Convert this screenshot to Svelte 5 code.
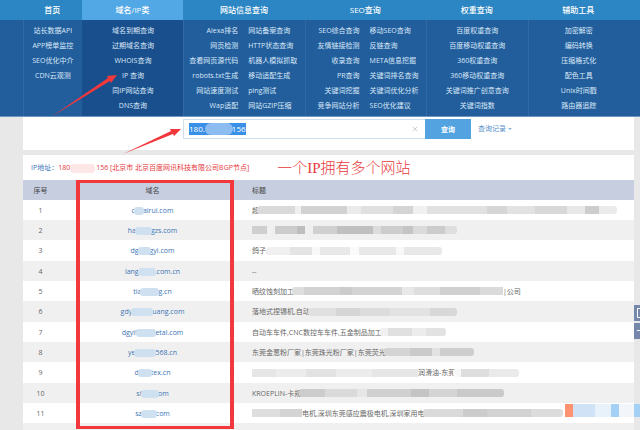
<script lang="ts">
	import { onMount } from 'svelte';

	// a number pair is a pixelated block: [width, grey level]
	type Part = string | [number, number];

	const menus = [
		{ title: '首页', kind: 'home', cols: [['站长数据API', 'APP榜单监控', 'SEO优化中介', 'CDN云观测']] },
		{
			title: '域名/IP类',
			kind: 'domain',
			cols: [['域名到期查询', '过期域名查询', 'WHOIS查询', 'IP 查询', '同IP网站查询', 'DNS查询']]
		},
		{
			title: '网站信息查询',
			kind: 'wide',
			cols: [
				['Alexa排名', '网页检测', '查看网页源代码', 'robots.txt生成', '网站速度测试', 'Wap适配'],
				['网站备案查询', 'HTTP状态查询', '机器人模拟抓取', '移动适配生成', 'ping测试', '网站GZIP压缩']
			]
		},
		{
			title: 'SEO查询',
			kind: 'wide',
			cols: [
				['SEO综合查询', '友情链接检测', '收录查询', 'PR查询', '关键词挖掘', '竞争网站分析'],
				['移动SEO查询', '反链查询', 'META信息挖掘', '关键词排名查询', '关键词优化分析', 'SEO优化建议']
			]
		},
		{
			title: '权重查询',
			kind: 'weight',
			cols: [
				['百度权重查询', '百度移动权重查询', '360权重查询', '360移动权重查询', '关键词推广创意查询', '关键词指数']
			]
		},
		{
			title: '辅助工具',
			kind: 'tools',
			cols: [['加密解密', '编码转换', '压缩格式化', '配色工具', 'Unix时间戳', '路由器追踪']]
		}
	];

	const rows: { head: string; mask: number; tail: string; title: Part[] }[] = [
		{ head: 'c', mask: 10, tail: 'airui.com', title: ['超', [38, 218], [6, 240], [46, 210], [14, 235], [32, 224], [20, 212], [14, 240], [60, 225], [20, 214], [28, 226], [32, 216], [18, 232], [14, 205], [18, 235]] },
		{ head: 'ha', mask: 17, tail: 'gzs.com', title: [[15, 207], [8, 240], [22, 204], [8, 190], [8, 240], [24, 208], [36, 192], [8, 220], [22, 205], [10, 196], [14, 218], [18, 204], [12, 222]] },
		{ head: 'dg', mask: 13, tail: 'gyi.com', title: ['鸽子,', [24, 240], [22, 228], [8, 248], [30, 232], [9, 250], [37, 232], [8, 248], [38, 232]] },
		{ head: 'lang', mask: 18, tail: '.com.cn', title: ['--'] },
		{ head: 'tia', mask: 19, tail: 'g.cn', title: ['晒纹蚀刻加工', [12, 222], [36, 210], [12, 204], [50, 212], [12, 232], [26, 222], [40, 208], [23, 218], '|公司'] },
		{ head: 'gdy', mask: 22, tail: 'uang.com', title: ['落地式捏锡机,自动', [28, 224], [24, 214], [30, 220], [40, 226], [27, 216]] },
		{ head: 'dgyif', mask: 20, tail: 'etal.com', title: ['自动车车件,CNC数控车车件,五金制品加工', [8, 240], [24, 224], [14, 236], [20, 226]] },
		{ head: 'ye', mask: 22, tail: '568.cn', title: ['东莞金葱粉厂家|东莞珠光粉厂家|东莞荧光', [26, 212], [22, 202], [8, 226], [34, 206]] },
		{ head: 'd', mask: 14, tail: 'tex.cn', title: [[24, 230], [30, 236], [30, 226], [36, 236], [46, 230], '润滑油-东莞', [8, 248], [28, 222], [30, 234]] },
		{ head: 'sf', mask: 18, tail: 'om', title: ['KROEPLIN-卡规', [26, 204], [32, 218], [10, 230], [44, 208], [18, 196], [28, 212], [47, 202]] },
		{ head: 'sz', mask: 16, tail: 'com', title: [[28, 222], [22, 212], '电机,深圳东莞感应震极电机,深圳家用电', [40, 218], [24, 204], [44, 210], [32, 220]] }
	];

	let ip = $state('180.\u00a0\u00a0\u00a0\u00a0\u00a0\u00a0\u00a0\u00a0\u00a0\u00a0\u00a0\u00a0\u00a0156');
	let box: HTMLInputElement;

	onMount(() => {
		box.focus();
		box.select();
	});
</script>

<div class="page">
	<nav>
		{#each menus as menu}
			<section class={menu.kind}>
				<a class="title" href="#top">{menu.title}</a>
				<div class="drop">
					{#each menu.cols as col}
						<ul>
							{#each col as item}
								<li><a href="#top">{item}</a></li>
							{/each}
						</ul>
					{/each}
				</div>
			</section>
		{/each}
	</nav>

	<main>
		<form class="search" onsubmit={(e) => e.preventDefault()}>
			<div class="field">
				<input aria-label="IP" bind:this={box} bind:value={ip} />
				<span class="smudge"></span>
				<button type="button" class="clear" aria-label="×" onclick={() => (ip = '')}>
					<svg viewBox="0 0 8 8"><path d="M1 1l6 6M7 1l-6 6" /></svg>
				</button>
			</div>
			<button class="go">查询</button>
			<a class="history" href="#top">
				查询记录
				<svg viewBox="0 0 4 3"><path d="M0 0h4l-2 2z" /></svg>
			</a>
		</form>

		<div class="result">
			<div class="summary">
				<p>
					<span class="key">IP地址：</span>180<i></i>156 [北京市 北京百度网讯科技有限公司BGP节点]
				</p>
				<strong>一个IP拥有多个网站</strong>
			</div>
			<table>
				<thead>
					<tr><th class="no">序号</th><th class="domain">域名</th><th class="name">标题</th></tr>
				</thead>
				<tbody>
					{#each rows as row, i}
						<tr>
							<td>{i + 1}</td>
							<td>
								<a href="#top">{row.head}<i style:width="{row.mask}px"></i>{row.tail}</a>
							</td>
							<td class="name">
								<div class="parts">
									{#each row.title as part}
										{#if typeof part === 'string'}
											<span>{part}</span>
										{:else}
											<b style:width="{part[0]}px" style:background="rgb({part[1]}, {part[1]}, {part[1]})"></b>
										{/if}
									{/each}
								</div>
							</td>
						</tr>
					{/each}
					<tr><td></td><td></td><td></td></tr>
				</tbody>
			</table>
			<div class="frame"></div>
		</div>
	</main>

	<svg class="arrows" viewBox="0 0 640 430">
		<path d="M51 117L108 78L107 76L117 75L111 83L110 81Z" />
		<path d="M123 154L171 131L170 129L181 129L174 136L173 134Z" />
	</svg>

	<aside>
		<button aria-label="□"><svg viewBox="0 0 6 16"><path d="M6 3.5H3.5v9H6" /></svg></button>
		<button aria-label="•"><svg viewBox="0 0 6 16"><path d="M3 7.5h3" /></svg></button>
	</aside>

	<div class="mark"><i></i><i></i><i></i><i></i><i></i><i></i></div>
</div>

<style>
	:global(body) {
		background: #e8e8e8;
	}

	.page {
		position: relative;
		height: 100vh;
		overflow: hidden;
		font: 7px/15px 'Open Sans', 'Noto Sans CJK SC', sans-serif;
		color: #666;
	}

	a {
		color: inherit;
		text-decoration: none;
	}

	button {
		border: 0;
		padding: 0;
		font: inherit;
	}

	nav {
		display: flex;
		height: 117px;
		padding: 0 11px 0 23px;
		box-sizing: border-box;
		background: linear-gradient(#2c86c3 20px, #225d9c 20px);
		border-bottom: 1px solid #6f96c0;
		color: #d9e9f8;
	}

	section {
		flex: 102 1 0;
		display: flex;
		flex-direction: column;
		text-align: center;
	}

	.home {
		flex-grow: 59;
	}

	.wide {
		flex-grow: 122;
	}

	.title {
		height: 20px;
		font-size: 8px;
		line-height: 20px;
		font-weight: 500;
		color: #fff;
	}

	.drop {
		flex: 1;
		display: flex;
		gap: 10px;
		padding-top: 3px;
		border-left: 1px solid #2f6aa6;
	}

	section.domain .title {
		background: #52a7e5;
	}

	section.domain .drop {
		background: #194f8c;
		border-color: #194f8c;
	}

	ul {
		flex: 1;
		margin: 0;
		padding: 0;
		list-style: none;
		white-space: nowrap;
	}

	.wide ul:first-child {
		flex: 0 0 54px;
		text-align: right;
	}

	.wide ul:last-child {
		text-align: left;
	}

	main {
		padding: 0 6px 0 23px;
	}

	.search {
		display: flex;
		height: 33px;
		box-sizing: border-box;
		padding: 2px 0 11px 160px;
		background: #fff;
	}

	.field {
		position: relative;
		flex: 0 1 242px;
		display: flex;
		align-items: center;
		border: 1px solid #cfdfec;
		border-right: 0;
		box-sizing: border-box;
	}

	input {
		flex: 1;
		min-width: 0;
		border: 0;
		outline: 0;
		padding: 0 5px;
		background: none;
		font: 8px/12px 'Open Sans', sans-serif;
		color: #333;
	}

	input::selection {
		background: #3a8fe6;
		color: #fff;
	}

	.smudge {
		position: absolute;
		left: 21px;
		top: 3px;
		width: 28px;
		height: 12px;
		border-radius: 6px;
		background: #8dbcf0;
	}

	.clear {
		width: 20px;
		height: 18px;
		background: none;
	}

	.clear svg {
		width: 6px;
		height: 6px;
		fill: none;
		stroke: #b4bfc9;
	}

	.go {
		width: 46px;
		background: #52a3df;
		color: #fff;
		font-weight: 600;
	}

	.history {
		padding-left: 7px;
		line-height: 20px;
		color: #5590c8;
	}

	.history svg {
		width: 4px;
		height: 3px;
		fill: #8bb4da;
	}

	.result {
		position: relative;
		margin-top: 5px;
		background: #fff;
	}

	.summary {
		display: flex;
		align-items: center;
		gap: 28px;
		height: 25px;
		padding-left: 8px;
		color: #e8393c;
		white-space: nowrap;
	}

	.summary p {
		margin: 0;
	}

	.key {
		color: #3a76b5;
	}

	.summary i {
		display: inline-block;
		width: 25px;
		height: 9px;
		margin-right: 1px;
		border-radius: 4px;
		background: #fde6e6;
		vertical-align: middle;
	}

	strong {
		font: 15px/20px 'Liberation Serif', 'Noto Sans CJK SC', serif;
		font-weight: 300;
	}

	table {
		width: 100%;
		border-collapse: collapse;
		table-layout: fixed;
		text-align: center;
	}

	th,
	td {
		height: 20px;
		padding: 0;
		font-weight: 400;
	}

	th {
		background: #c7cee0;
		color: #444;
	}

	.no {
		width: 35px;
		padding-right: 18px;
	}

	th.domain {
		width: 153px;
	}

	td:first-child {
		padding-right: 18px;
	}

	.name {
		padding-left: 23px;
		text-align: left;
	}

	tbody tr:nth-child(even) {
		background: #f0f0f0;
	}

	tbody tr:nth-child(3n) td {
		height: 21px;
	}

	td a {
		color: #3a74b4;
	}

	/* blobs smear over the letters beside them */
	td i {
		position: relative;
		display: inline-block;
		height: 8px;
		margin: 0 -1px;
		border-radius: 3px;
		background: #cfe0f0;
		vertical-align: middle;
	}

	.parts {
		display: flex;
		align-items: center;
		white-space: nowrap;
	}

	.parts b {
		position: relative;
		height: 8px;
	}

	.parts span + b {
		margin-left: -2px;
		border-radius: 3px 0 0 3px;
	}

	.parts b:last-child {
		border-radius: 0 3px 3px 0;
	}

	.frame {
		position: absolute;
		left: 53px;
		top: 25px;
		width: 158px;
		height: 249px;
		box-sizing: border-box;
		border: solid #f2383c;
		border-width: 3px 4px;
	}

	.arrows {
		position: absolute;
		left: 0;
		top: 0;
		width: 640px;
		height: 430px;
		fill: #f2383c;
		pointer-events: none;
	}

	aside {
		position: absolute;
		right: 0;
		top: 305px;
		display: grid;
		gap: 2px;
	}

	aside button {
		width: 6px;
		height: 16px;
		background: #7587ab;
	}

	aside svg {
		display: block;
		width: 6px;
		height: 16px;
		fill: none;
		stroke: #fff;
	}

	.mark {
		position: absolute;
		right: 0;
		top: 404px;
		display: flex;
	}

	.mark i {
		width: 8px;
		height: 13px;
		background: #ff9270;
	}

	.mark i:nth-child(2) {
		width: 22px;
		background: #cfe2f6;
	}

	.mark i:nth-child(3) {
		width: 16px;
		background: #e8f2fb;
	}

	.mark i:nth-child(4) {
		background: #a5d0f5;
	}

	.mark i:nth-child(5) {
		width: 15px;
		background: #f2f6fb;
	}

	.mark i:nth-child(6) {
		width: 6px;
		background: #a5d0f5;
	}
</style>
